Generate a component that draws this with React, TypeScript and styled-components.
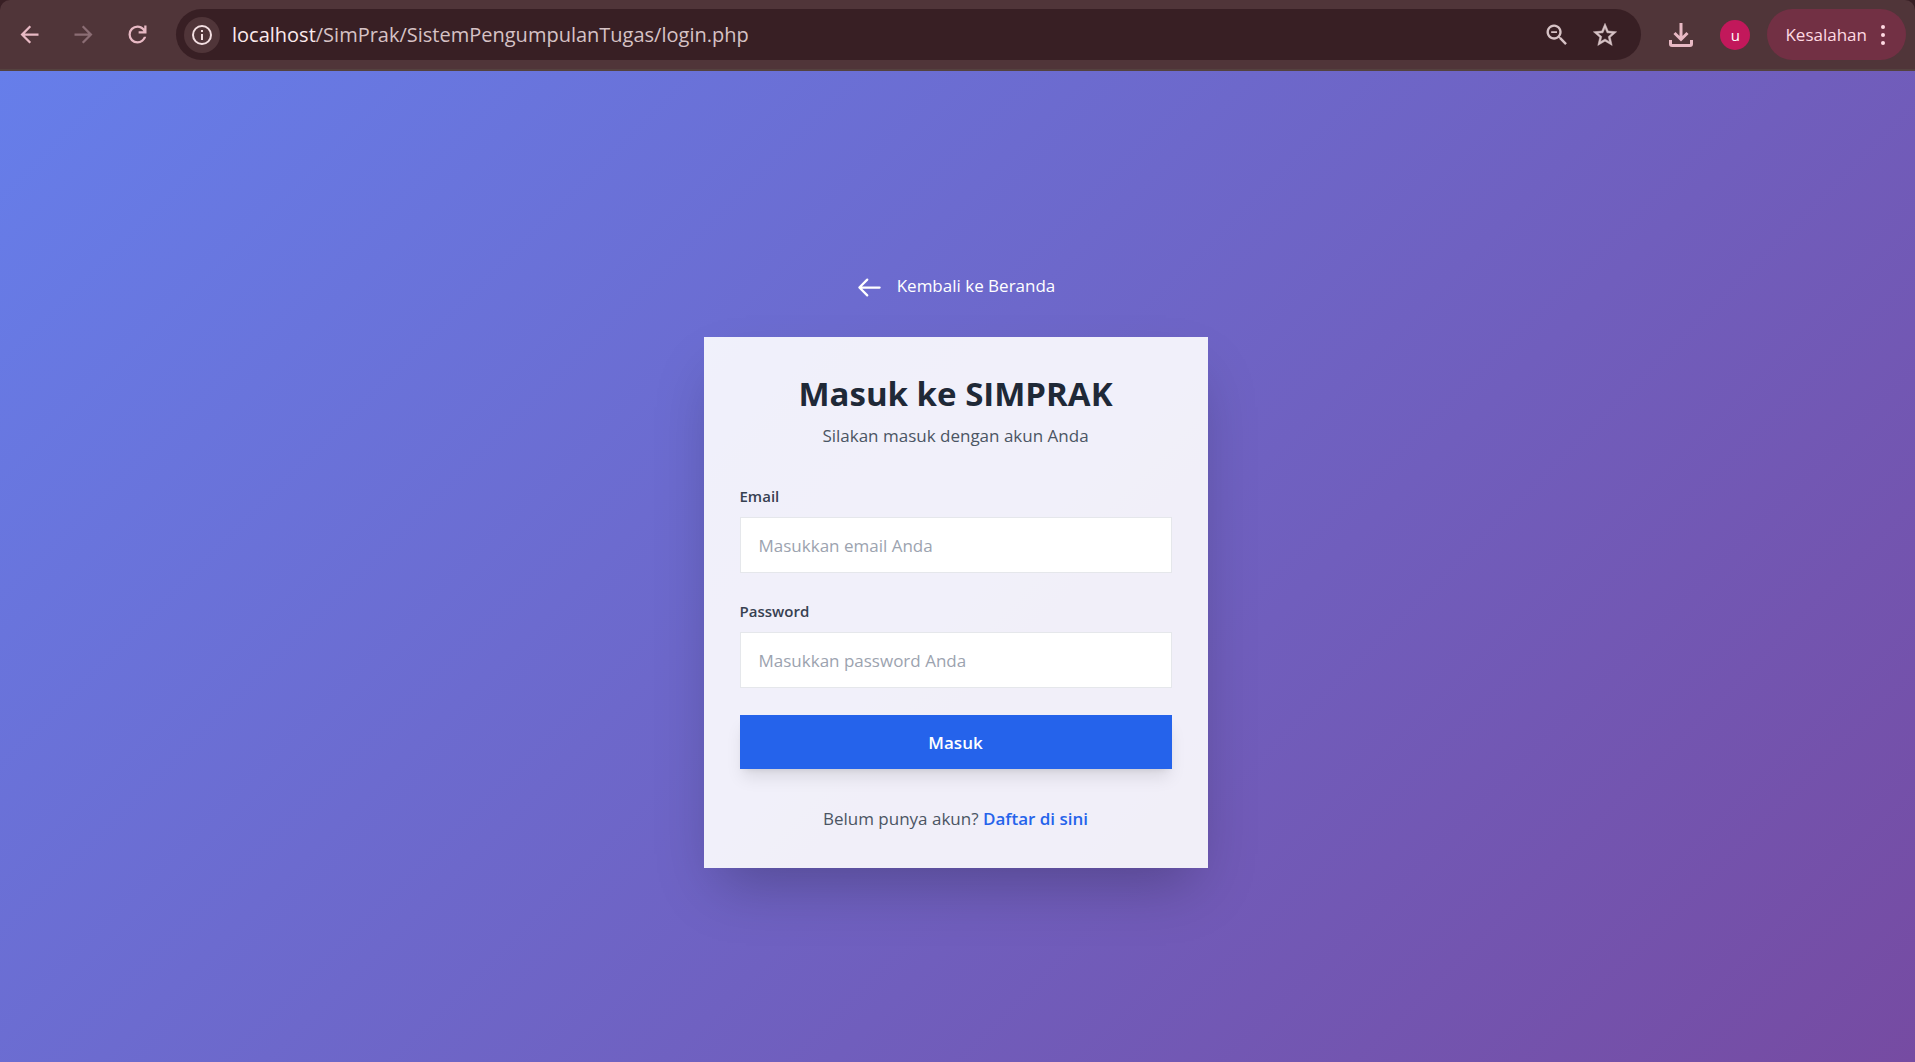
import React from "react";
import styled, { createGlobalStyle } from "styled-components";

const GlobalStyle = createGlobalStyle`
  *, *::before, *::after { box-sizing: border-box; }
  body {
    margin: 0;
    font-family: "Segoe UI", "Open Sans", "Noto Sans", sans-serif;
  }
  button, input { font-family: inherit; }
`;

const Window = styled.div`
  display: flex;
  flex-direction: column;
  min-height: 100vh;
  background: #381f24;
`;

const Toolbar = styled.header`
  display: flex;
  align-items: center;
  height: 71px;
  padding: 0 9px 0 11px;
  background: #503539;
  border-bottom: 2px solid #54423f;
  border-radius: 10px 10px 0 0;
`;

const NavGroup = styled.nav`
  display: flex;
  gap: 18px;
`;

const IconButton = styled.button<{ $color?: string }>`
  display: grid;
  place-items: center;
  width: 36px;
  height: 36px;
  padding: 0;
  border: 0;
  border-radius: 50%;
  background: transparent;
  color: ${(p) => p.$color ?? "#e8b9c4"};
`;

const AddressBar = styled.div`
  display: flex;
  flex: 1;
  align-items: center;
  gap: 12px;
  height: 51px;
  margin-left: 21px;
  padding: 0 18px 0 8px;
  border-radius: 26px;
  background: #381f24;
`;

const SiteInfo = styled(IconButton)`
  background: #503539;
`;

const Url = styled.div`
  flex: 1;
  color: #d6c2c5;
  font-size: 20px;
  line-height: 28px;
  white-space: nowrap;
`;

const Host = styled.span`
  color: #fbeaec;
`;

const AddressActions = styled.div`
  display: flex;
  gap: 12px;
`;

const ToolbarActions = styled.div`
  display: flex;
  align-items: center;
  gap: 17px;
  margin-left: 22px;
`;

const Avatar = styled.button`
  width: 30px;
  height: 30px;
  margin-left: 4px;
  padding: 0;
  border: 0;
  border-radius: 50%;
  background: #c2185b;
  color: #fff;
  font-size: 15px;
  line-height: 28px;
`;

const ErrorPill = styled.button`
  display: flex;
  align-items: center;
  gap: 14px;
  height: 51px;
  padding: 0 21px 0 18px;
  border: 0;
  border-radius: 26px;
  background: #723044;
  color: #ffd9e2;
  font-size: 17px;
`;

const Page = styled.main`
  display: flex;
  flex: 1;
  flex-direction: column;
  align-items: center;
  justify-content: center;
  padding-right: 4px;
  background: linear-gradient(135deg, #667eea 0%, #764ba2 100%);
`;

const BackLink = styled.a`
  display: flex;
  align-items: flex-start;
  gap: 14px;
  margin-bottom: 36px;
  padding-top: 9px;
  color: #fff;
  font-size: 17px;
  line-height: 23px;
  text-decoration: none;
`;

const Card = styled.section`
  width: 100%;
  max-width: 504px;
  padding: 36px;
  background: rgba(255, 255, 255, 0.9);
  box-shadow: 0 28px 56px -14px rgba(0, 0, 0, 0.25);
  text-align: center;
`;

const Title = styled.h1`
  margin: 0 0 7px;
  color: #1f2937;
  font-size: 33px;
  font-weight: 700;
  line-height: 42px;
`;

const Text = styled.p`
  margin: 0;
  color: #4b5563;
  font-size: 17px;
  line-height: 27px;
`;

const Form = styled.form`
  display: flex;
  flex-direction: column;
  gap: 27px;
  margin: 36px 0;
`;

const Field = styled.div`
  display: flex;
  flex-direction: column;
  gap: 9px;
  text-align: left;
`;

const Label = styled.label`
  color: #374151;
  font-size: 15px;
  font-weight: 600;
  line-height: 23px;
`;

const Input = styled.input`
  width: 100%;
  height: 56px;
  padding: 0 18px;
  border: 1px solid #e5e7eb;
  border-radius: 0;
  background: #fff;
  color: #1f2937;
  font-size: 17px;
  &::placeholder { color: #9ca3af; opacity: 1; }
`;

const Submit = styled.button`
  height: 54px;
  border: 0;
  background: #2563eb;
  box-shadow: 0 11px 17px -3px rgba(0, 0, 0, 0.1), 0 4px 7px -4px rgba(0, 0, 0, 0.1);
  color: #fff;
  font-size: 17px;
  font-weight: 600;
  line-height: 27px;
`;

const RegisterLink = styled.a`
  color: #2563eb;
  font-weight: 600;
  text-decoration: none;
`;

const paths = {
  back: "M20 11H7.83l5.59-5.59L12 4l-8 8 8 8 1.41-1.41L7.83 13H20v-2z",
  forward: "M12 4l-1.41 1.41L16.17 11H4v2h12.17l-5.58 5.59L12 20l8-8z",
  reload:
    "M12 20q-3.35 0-5.675-2.325T4 12t2.325-5.675T12 4q1.725 0 3.3.713T18 6.75V4h2v7h-7V9h4.2q-.8-1.4-2.187-2.2T12 6Q9.5 6 7.75 7.75T6 12t1.75 4.25T12 18q1.925 0 3.475-1.1T17.65 14h2.1q-.7 2.65-2.85 4.325T12 20z",
  info: "M11 7h2v2h-2zm0 4h2v6h-2zm1-9a10 10 0 1 0 0 20 10 10 0 0 0 0-20zm0 18a8 8 0 1 1 0-16 8 8 0 0 1 0 16z",
  zoomOut:
    "M15.5 14h-.79l-.28-.27A6.5 6.5 0 1 0 13.73 14.43l.27.28v.79l5 4.99L20.49 19l-4.99-5zm-6 0a4.5 4.5 0 1 1 0-9 4.5 4.5 0 0 1 0 9zM7 8.8h5v1.5H7z",
  star: "M22 9.24l-7.19-.62L12 2 9.19 8.63 2 9.24l5.46 4.73L5.82 21 12 17.27 18.18 21l-1.63-7.03L22 9.24zM12 15.4l-3.76 2.27 1-4.28-3.32-2.88 4.38-.38L12 6.1l1.71 4.04 4.38.38-3.32 2.88 1 4.28L12 15.4z",
};

function Glyph({ name, size = 27 }: { name: keyof typeof paths; size?: number }) {
  return (
    <svg
      width={size}
      height={size}
      viewBox="0 0 24 24"
      fill="currentColor"
      stroke={name === "star" ? "currentColor" : "none"}
      strokeWidth="0.4"
      aria-hidden="true"
    >
      <path d={paths[name]} />
    </svg>
  );
}

export default function App() {
  return (
    <Window>
      <GlobalStyle />
      <Toolbar>
        <NavGroup>
          <IconButton aria-label="Kembali"><Glyph name="back" /></IconButton>
          <IconButton aria-label="Maju" $color="#8b6d74"><Glyph name="forward" /></IconButton>
          <IconButton aria-label="Muat ulang"><Glyph name="reload" /></IconButton>
        </NavGroup>
        <AddressBar>
          <SiteInfo aria-label="Informasi situs" $color="#f3dfe2"><Glyph name="info" size={24} /></SiteInfo>
          <Url><Host>localhost</Host>/SimPrak/SistemPengumpulanTugas/login.php</Url>
          <AddressActions>
            <IconButton aria-label="Zoom" $color="#d6c2c5"><Glyph name="zoomOut" size={28} /></IconButton>
            <IconButton aria-label="Bookmark" $color="#d6c2c5"><Glyph name="star" size={28} /></IconButton>
          </AddressActions>
        </AddressBar>
        <ToolbarActions>
          <IconButton aria-label="Download">
            <svg width="24" height="24" viewBox="0 0 24 24" fill="none" stroke="currentColor" strokeWidth="3" aria-hidden="true">
              <path d="M12 0v16M5.5 10l6.5 6.5 6.5-6.5M1.5 17v4q0 1.5 1.5 1.5h18q1.5 0 1.5-1.5v-4" />
            </svg>
          </IconButton>
          <Avatar aria-label="Profil">u</Avatar>
          <ErrorPill>
            Kesalahan
            <svg width="4" height="22" viewBox="0 0 4 22" fill="currentColor" aria-hidden="true">
              <circle cx="2" cy="3" r="2" /><circle cx="2" cy="11" r="2" /><circle cx="2" cy="19" r="2" />
            </svg>
          </ErrorPill>
        </ToolbarActions>
      </Toolbar>
      <Page>
        <BackLink href="#beranda">
          <svg width="27" height="27" viewBox="0 0 24 24" fill="none" stroke="currentColor" strokeWidth="2" strokeLinecap="round" strokeLinejoin="round" aria-hidden="true">
            <path d="M10 19l-7-7m0 0l7-7m-7 7h18" />
          </svg>
          Kembali ke Beranda
        </BackLink>
        <Card>
          <Title>Masuk ke SIMPRAK</Title>
          <Text>Silakan masuk dengan akun Anda</Text>
          <Form onSubmit={(e) => e.preventDefault()}>
            <Field>
              <Label htmlFor="email">Email</Label>
              <Input id="email" type="email" placeholder="Masukkan email Anda" />
            </Field>
            <Field>
              <Label htmlFor="password">Password</Label>
              <Input id="password" type="password" placeholder="Masukkan password Anda" />
            </Field>
            <Submit type="submit">Masuk</Submit>
          </Form>
          <Text>Belum punya akun? <RegisterLink href="#daftar">Daftar di sini</RegisterLink></Text>
        </Card>
      </Page>
    </Window>
  );
}
